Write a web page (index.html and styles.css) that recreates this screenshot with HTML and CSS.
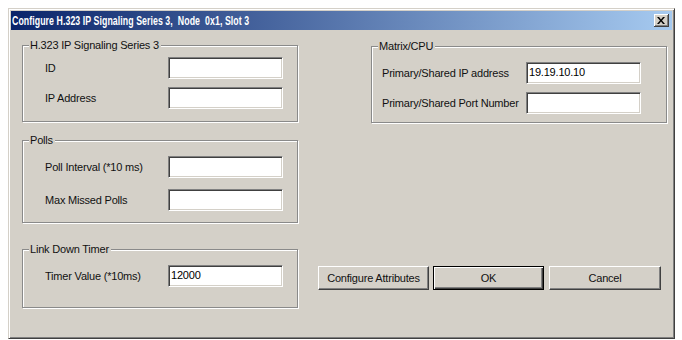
FILE: index.html
```html
<!DOCTYPE html>
<html>
<head>
<meta charset="utf-8">
<link rel="stylesheet" href="styles.css">
</head>
<body>
<div class="window">
  <div class="titlebar">
    <span class="title">Configure H.323 IP Signaling Series 3,&nbsp; Node &nbsp;0x1, Slot 3</span>
    <span class="close"><svg width="8" height="7" viewBox="0 0 8 7"><path d="M0 0h2l2 2.5L6 0h2L5 3.5 8 7H6L4 4.5 2 7H0l3-3.5z" fill="#000"/></svg></span>
  </div>
  <div class="content">
    <div class="col-left">
      <div class="group g-sig">
        <span class="legend">H.323 IP Signaling Series 3</span>
        <div class="row"><span class="lbl">ID</span><span class="field"></span></div>
        <div class="row"><span class="lbl">IP Address</span><span class="field"></span></div>
      </div>
      <div class="group g-polls">
        <span class="legend">Polls</span>
        <div class="row"><span class="lbl">Poll Interval (*10 ms)</span><span class="field"></span></div>
        <div class="row"><span class="lbl">Max Missed Polls</span><span class="field"></span></div>
      </div>
      <div class="group g-link">
        <span class="legend">Link Down Timer</span>
        <div class="row"><span class="lbl">Timer Value (*10ms)</span><span class="field">12000</span></div>
      </div>
    </div>
    <div class="col-right">
      <div class="group g-matrix">
        <span class="legend">Matrix/CPU</span>
        <div class="row"><span class="lbl">Primary/Shared IP address</span><span class="field">19.19.10.10</span></div>
        <div class="row"><span class="lbl">Primary/Shared Port Number</span><span class="field"></span></div>
      </div>
      <div class="buttons">
        <span class="btn">Configure Attributes</span>
        <span class="btn default">OK</span>
        <span class="btn">Cancel</span>
      </div>
    </div>
  </div>
</div>
</body>
</html>
```
FILE: styles.css
```css
html, body {
  margin: 0;
  padding: 0;
  background: #ffffff;
  overflow: hidden;
}
body {
  padding: 8px 0 0 8px;
  font-family: "Liberation Sans", Arial, sans-serif;
  font-size: 11px;
  color: #000;
}
.window {
  width: 661px;
  height: 325px;
  background: #d4d0c8;
  border-top: 1px solid #d4d0c8;
  border-left: 1px solid #d4d0c8;
  border-right: 1px solid #404040;
  border-bottom: 1px solid #404040;
  box-shadow: inset 1px 1px 0 #ffffff, inset -1px -1px 0 #808080;
  padding: 2px;
}
.titlebar {
  height: 19px;
  background: linear-gradient(to right, #0a246a, #a6caf0);
  display: flex;
  align-items: center;
  justify-content: space-between;
  padding: 0 3px 0 1px;
}
.title {
  color: #fff;
  font-weight: bold;
  font-size: 12px;
  white-space: pre;
  display: inline-block;
  transform: scaleX(0.73);
  transform-origin: left center;
  letter-spacing: 0.1px;
}
.close {
  width: 14px;
  height: 12px;
  background: #d4d0c8;
  border-right: 1px solid #404040;
  border-bottom: 1px solid #404040;
  box-shadow: inset 1px 1px 0 #fff, inset -1px -1px 0 #808080;
  display: flex;
  align-items: center;
  justify-content: center;
}
.content {
  display: flex;
  padding: 15px 0 0 11px;
}
.col-left {
  width: 276px;
  display: flex;
  flex-direction: column;
}
.col-right {
  margin-left: 20px;
  width: 349px;
  display: flex;
  flex-direction: column;
}
.group {
  position: relative;
  border: 1px solid #8a8a8a;
  box-shadow: inset 1px 1px 0 #fff, 1px 1px 0 #fff;
  display: flex;
  flex-direction: column;
}
.legend {
  position: absolute;
  top: -7px;
  left: 6px;
  padding: 0 2px 0 1px;
  background: #d4d0c8;
  line-height: 13px;
  letter-spacing: -0.2px;
  color: #111;
}
.row {
  display: flex;
  align-items: center;
}
.lbl {
  letter-spacing: -0.2px;
  white-space: nowrap;
  color: #111;
}
.field {
  background: #fff;
  height: 18px;
  width: 111px;
  border-top: 1px solid #808080;
  border-left: 1px solid #808080;
  border-right: 1px solid #fff;
  border-bottom: 1px solid #fff;
  box-shadow: inset 1px 1px 0 #404040, inset -1px -1px 0 #d4d0c8;
  padding: 1px 0 1px 2px;
  line-height: 17px;
  letter-spacing: -0.2px;
  box-sizing: content-box;
}
.g-sig { padding: 11px 0 0 22px; box-sizing: border-box; height: 77px; gap: 8px; }
.g-sig .lbl, .g-polls .lbl, .g-link .lbl { width: 123px; }
.g-polls { margin-top: 18px; height: 83px; box-sizing: border-box; padding: 15px 0 0 22px; gap: 11px; }
.g-link { margin-top: 26px; height: 59px; box-sizing: border-box; padding: 15px 0 0 22px; }
.g-matrix {
  margin-left: 53px;
  margin-top: 1px;
  width: 296px;
  height: 77px;
  box-sizing: border-box;
  padding: 15px 0 0 10px;
  gap: 8px;
}
.g-matrix .lbl { width: 144px; }
.buttons {
  margin-top: 143px;
  display: flex;
  gap: 4px;
}
.btn {
  height: 22px;
  width: 109px;
  background: #d4d0c8;
  border-top: 1px solid #fff;
  border-left: 1px solid #fff;
  border-right: 1px solid #404040;
  border-bottom: 1px solid #404040;
  box-shadow: inset -1px -1px 0 #808080;
  display: flex;
  align-items: center;
  justify-content: center;
  letter-spacing: -0.2px;
  color: #111;
}
.btn.default {
  border: 1px solid #000;
  box-shadow: inset 1px 1px 0 #fff, inset -1px -1px 0 #404040, inset -2px -2px 0 #808080;
}
.buttons .btn:last-child { width: 110px; margin-left: 1px; }
```
